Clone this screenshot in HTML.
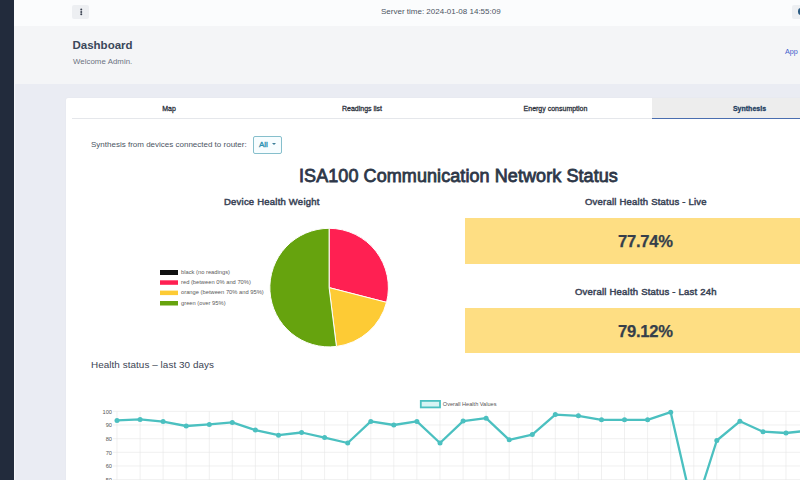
<!DOCTYPE html>
<html><head><meta charset="utf-8">
<style>
*{box-sizing:border-box;margin:0;padding:0}
html,body{width:800px;height:480px;overflow:hidden;background:#eaecf3;font-family:"Liberation Sans",sans-serif;position:relative}
.a{position:absolute;white-space:nowrap}
#side{left:0;top:0;width:14px;height:480px;background:#222b3c;box-shadow:1px 0 1px rgba(255,255,255,0.5)}
#top{left:14px;top:0;width:786px;height:26px;background:#fbfcfd}
#hdr{left:14px;top:26px;width:786px;height:58px;background:#f4f5f7}
.btn{background:#edeff2;border-radius:2px}
#card{left:66px;top:98px;width:790px;height:400px;background:#fff;border-radius:2px;box-shadow:0 0 1.5px rgba(0,0,0,0.06)}
.tab{top:98px;height:21px;font-size:7px;color:#2a303b;text-align:center;line-height:21px;-webkit-text-stroke:0.28px currentColor;padding-left:1px}
.t1{font-weight:bold;color:#3b4557}
.sb{font-weight:normal;-webkit-text-stroke:0.8px currentColor}
</style></head>
<body>
<div class="a" id="side"></div>
<div class="a" id="top"></div>
<div class="a btn" style="left:72px;top:5px;width:17px;height:14px"></div>
<svg class="a" style="left:72px;top:4px" width="18" height="16"><g fill="#3a4150"><circle cx="9.25" cy="5.6" r="1"/><circle cx="9.25" cy="7.9" r="1"/><circle cx="9.25" cy="10.2" r="1"/></g></svg>
<div class="a" style="left:381px;top:7.3px;font-size:8px;color:#4b5563">Server time: 2024-01-08 14:55:09</div>
<div class="a btn" style="left:792px;top:5px;width:17px;height:14px"></div>
<div class="a" style="left:798px;top:7.5px;width:6px;height:7px;background:#2b5b82;border-radius:3px"></div>

<div class="a" id="hdr"></div>
<div class="a" style="left:72.5px;top:38.6px;font-size:11.5px;font-weight:bold;color:#3a475a">Dashboard</div>
<div class="a" style="left:73px;top:56.5px;font-size:7.8px;letter-spacing:0.07px;color:#6b7280">Welcome Admin.</div>
<div class="a" style="left:785px;top:47px;font-size:7.2px;color:#3f5ecc">App</div>

<div class="a" id="card"></div>
<div class="a" style="left:72px;top:118px;width:780px;height:1px;background:#e5e7eb"></div>
<div class="a tab" style="left:72px;width:193px">Map</div>
<div class="a tab" style="left:265px;width:193px">Readings list</div>
<div class="a tab" style="left:458px;width:194px">Energy consumption</div>
<div class="a tab" style="left:652px;width:194px;background:#ededed;border-bottom:1px solid #4a6eb0;font-weight:bold;color:#243f62">Synthesis</div>

<div class="a" style="left:91px;top:139.5px;font-size:8px;color:#4b5563">Synthesis from devices connected to router:</div>
<div class="a" style="left:252.5px;top:136px;width:29.7px;height:17.8px;border:1px solid #86bfcc;background:#f7fdff;border-radius:2px"></div>
<div class="a" style="left:259px;top:140px;font-size:8px;-webkit-text-stroke:0.35px #2a8fb0;color:#2a8fb0">All</div>
<div class="a" style="left:272px;top:143px;width:0;height:0;border-left:2px solid transparent;border-right:2px solid transparent;border-top:2px solid #3c7f99"></div>

<div class="a t1 sb" style="left:299px;top:165.5px;font-size:18px;letter-spacing:0.08px;color:#2d3748">ISA100 Communication Network Status</div>
<div class="a t1 sb" style="left:224px;top:196px;font-size:9.5px;-webkit-text-stroke-width:0.5px;letter-spacing:0.22px">Device Health Weight</div>
<div class="a t1 sb" style="left:585px;top:196px;font-size:9.5px;-webkit-text-stroke-width:0.5px;letter-spacing:0.22px">Overall Health Status - Live</div>
<div class="a" style="left:465px;top:218px;width:400px;height:46px;background:#fede83"></div>
<div class="a" style="left:618px;top:231.5px;font-size:16.6px;font-weight:bold;letter-spacing:-0.25px;-webkit-text-stroke:0.25px #353e4b;color:#353e4b">77.74%</div>
<div class="a t1 sb" style="left:575px;top:286px;font-size:9.5px;-webkit-text-stroke-width:0.5px;letter-spacing:0.22px">Overall Health Status - Last 24h</div>
<div class="a" style="left:465px;top:308px;width:400px;height:45px;background:#fede83"></div>
<div class="a" style="left:618px;top:321.9px;font-size:16.6px;font-weight:bold;letter-spacing:-0.25px;-webkit-text-stroke:0.25px #353e4b;color:#353e4b">79.12%</div>

<svg class="a" style="left:0;top:0" width="800" height="480">
  <path d="M329.1,287.6 L329.1,228.3 A59.3,59.3 0 0 1 386.54,302.35 Z" fill="#ff2052" stroke="#fff" stroke-width="1"/>
  <path d="M329.1,287.6 L386.54,302.35 A59.3,59.3 0 0 1 336.43,346.45 Z" fill="#fdcb35" stroke="#fff" stroke-width="1"/>
  <path d="M329.1,287.6 L336.43,346.45 A59.3,59.3 0 1 1 329.1,228.3 Z" fill="#66a30e" stroke="#fff" stroke-width="1"/>
  <rect x="160" y="270" width="18" height="5" fill="#111"/>
  <rect x="160" y="280.3" width="18" height="4.5" fill="#ff2052"/>
  <rect x="160" y="290.6" width="18" height="4.5" fill="#fdcb35"/>
  <rect x="160" y="301" width="18" height="4.5" fill="#66a30e"/>
  <g font-family="Liberation Sans" font-size="5.78" fill="#5a5a5a">
    <text x="181" y="274.0">black (no readings)</text>
    <text x="181" y="284.2">red (between 0% and 70%)</text>
    <text x="181" y="294.1">orange (between 70% and 95%)</text>
    <text x="181" y="304.5">green (over 95%)</text>
  </g>
</svg>

<div class="a" style="left:91px;top:358.6px;font-size:9.9px;letter-spacing:0.06px;color:#3b4453">Health status – last 30 days</div>

<svg class="a" style="left:0;top:0" width="800" height="480">
  <g stroke="#e6e6e6" stroke-width="0.6"><line x1="117.0" y1="411.4" x2="117.0" y2="480"/><line x1="140.1" y1="411.4" x2="140.1" y2="480"/><line x1="163.1" y1="411.4" x2="163.1" y2="480"/><line x1="186.2" y1="411.4" x2="186.2" y2="480"/><line x1="209.3" y1="411.4" x2="209.3" y2="480"/><line x1="232.3" y1="411.4" x2="232.3" y2="480"/><line x1="255.4" y1="411.4" x2="255.4" y2="480"/><line x1="278.5" y1="411.4" x2="278.5" y2="480"/><line x1="301.6" y1="411.4" x2="301.6" y2="480"/><line x1="324.6" y1="411.4" x2="324.6" y2="480"/><line x1="347.7" y1="411.4" x2="347.7" y2="480"/><line x1="370.8" y1="411.4" x2="370.8" y2="480"/><line x1="393.8" y1="411.4" x2="393.8" y2="480"/><line x1="416.9" y1="411.4" x2="416.9" y2="480"/><line x1="440.0" y1="411.4" x2="440.0" y2="480"/><line x1="463.1" y1="411.4" x2="463.1" y2="480"/><line x1="486.1" y1="411.4" x2="486.1" y2="480"/><line x1="509.2" y1="411.4" x2="509.2" y2="480"/><line x1="532.3" y1="411.4" x2="532.3" y2="480"/><line x1="555.3" y1="411.4" x2="555.3" y2="480"/><line x1="578.4" y1="411.4" x2="578.4" y2="480"/><line x1="601.5" y1="411.4" x2="601.5" y2="480"/><line x1="624.5" y1="411.4" x2="624.5" y2="480"/><line x1="647.6" y1="411.4" x2="647.6" y2="480"/><line x1="670.7" y1="411.4" x2="670.7" y2="480"/><line x1="693.8" y1="411.4" x2="693.8" y2="480"/><line x1="716.8" y1="411.4" x2="716.8" y2="480"/><line x1="739.9" y1="411.4" x2="739.9" y2="480"/><line x1="763.0" y1="411.4" x2="763.0" y2="480"/><line x1="786.0" y1="411.4" x2="786.0" y2="480"/><line x1="809.1" y1="411.4" x2="809.1" y2="480"/><line x1="113" y1="411.4" x2="800" y2="411.4"/><line x1="113" y1="425.0" x2="800" y2="425.0"/><line x1="113" y1="438.7" x2="800" y2="438.7"/><line x1="113" y1="452.3" x2="800" y2="452.3"/><line x1="113" y1="466.0" x2="800" y2="466.0"/><line x1="113" y1="479.6" x2="800" y2="479.6"/></g>
  <rect x="420.8" y="400.9" width="19.2" height="6.5" fill="#d6f4f4" stroke="#4bc0c0" stroke-width="1.8"/>
  <text x="442.8" y="405.8" font-family="Liberation Sans" font-size="5.6" fill="#555">Overall Health Values</text>
  <g font-family="Liberation Sans" font-size="5.7" fill="#555" text-anchor="end">
    <text x="112" y="413.5">100</text>
    <text x="112" y="427.2">90</text>
    <text x="112" y="440.8">80</text>
    <text x="112" y="454.5">70</text>
    <text x="112" y="468.1">60</text>
    <text x="112" y="481.8">50</text>
  </g>
  <polyline fill="none" stroke="#4bc0c0" stroke-width="2.3" stroke-linejoin="round" points="117.0,420.4 140.1,419.4 163.1,421.6 186.2,426.0 209.3,424.4 232.3,422.4 255.4,430.1 278.5,435.2 301.6,432.5 324.6,437.6 347.7,443.0 370.8,421.4 393.8,425.0 416.9,421.4 440.0,443.0 463.1,421.1 486.1,418.2 509.2,439.8 532.3,434.6 555.3,414.6 578.4,415.8 601.5,419.8 624.5,419.8 647.6,419.8 670.7,412.2 693.8,512.6 716.8,440.5 739.9,421.3 763.0,431.7 786.0,433.0 809.1,430.5"/>
  <g fill="#4bc0c0"><circle cx="117.0" cy="420.4" r="2.5"/><circle cx="140.1" cy="419.4" r="2.5"/><circle cx="163.1" cy="421.6" r="2.5"/><circle cx="186.2" cy="426.0" r="2.5"/><circle cx="209.3" cy="424.4" r="2.5"/><circle cx="232.3" cy="422.4" r="2.5"/><circle cx="255.4" cy="430.1" r="2.5"/><circle cx="278.5" cy="435.2" r="2.5"/><circle cx="301.6" cy="432.5" r="2.5"/><circle cx="324.6" cy="437.6" r="2.5"/><circle cx="347.7" cy="443.0" r="2.5"/><circle cx="370.8" cy="421.4" r="2.5"/><circle cx="393.8" cy="425.0" r="2.5"/><circle cx="416.9" cy="421.4" r="2.5"/><circle cx="440.0" cy="443.0" r="2.5"/><circle cx="463.1" cy="421.1" r="2.5"/><circle cx="486.1" cy="418.2" r="2.5"/><circle cx="509.2" cy="439.8" r="2.5"/><circle cx="532.3" cy="434.6" r="2.5"/><circle cx="555.3" cy="414.6" r="2.5"/><circle cx="578.4" cy="415.8" r="2.5"/><circle cx="601.5" cy="419.8" r="2.5"/><circle cx="624.5" cy="419.8" r="2.5"/><circle cx="647.6" cy="419.8" r="2.5"/><circle cx="670.7" cy="412.2" r="2.5"/><circle cx="693.8" cy="512.6" r="2.5"/><circle cx="716.8" cy="440.5" r="2.5"/><circle cx="739.9" cy="421.3" r="2.5"/><circle cx="763.0" cy="431.7" r="2.5"/><circle cx="786.0" cy="433.0" r="2.5"/><circle cx="809.1" cy="430.5" r="2.5"/></g>
</svg>
</body></html>
